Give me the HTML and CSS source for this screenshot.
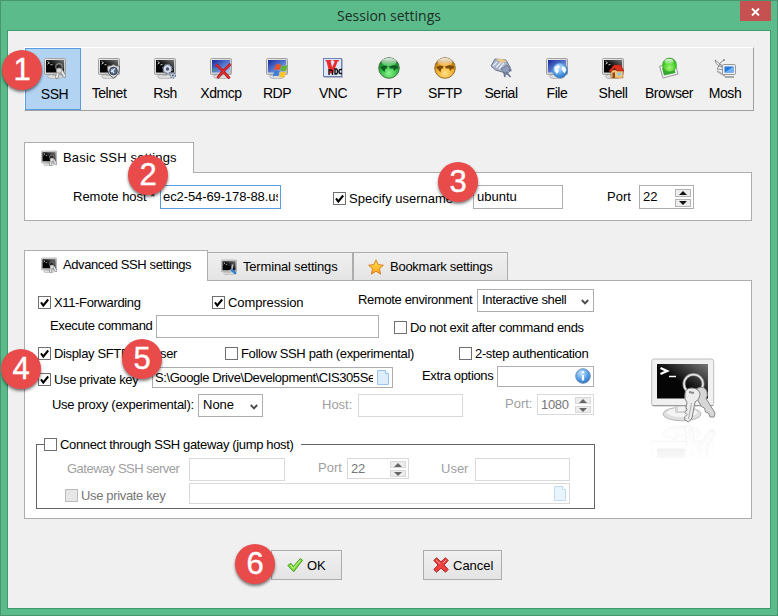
FILE: index.html
```html
<!DOCTYPE html>
<html lang="en">
<head>
<meta charset="utf-8">
<title>Session settings</title>
<link rel="stylesheet" href="styles.css">
</head>
<body>
<svg class="defs" width="0" height="0" aria-hidden="true">
  <defs>
    <linearGradient id="gFrame" x1="0" y1="0" x2="1" y2="1"><stop offset="0" stop-color="#f4f4f4"/><stop offset="1" stop-color="#b4b4b4"/></linearGradient>
    <linearGradient id="gDark" x1="0" y1="1" x2="1" y2="0"><stop offset="0.45" stop-color="#050505"/><stop offset="1" stop-color="#777"/></linearGradient>
    <linearGradient id="gBlue" x1="0" y1="0" x2="1" y2="1"><stop offset="0" stop-color="#172a9c"/><stop offset="0.6" stop-color="#5f83d8"/><stop offset="1" stop-color="#b7d0f5"/></linearGradient>
    <radialGradient id="gGreen" cx="0.5" cy="0.75" r="0.75"><stop offset="0" stop-color="#8df58c"/><stop offset="0.6" stop-color="#25b53a"/><stop offset="1" stop-color="#0b5f1b"/></radialGradient>
    <radialGradient id="gLime" cx="0.5" cy="0.7" r="0.75"><stop offset="0" stop-color="#a8f57c"/><stop offset="0.6" stop-color="#3fce22"/><stop offset="1" stop-color="#159410"/></radialGradient>
    <radialGradient id="gGold" cx="0.5" cy="0.75" r="0.75"><stop offset="0" stop-color="#ffe38a"/><stop offset="0.6" stop-color="#f3a31b"/><stop offset="1" stop-color="#8d5606"/></radialGradient>
    <radialGradient id="gSky" cx="0.4" cy="0.3" r="0.8"><stop offset="0" stop-color="#c8e6ff"/><stop offset="0.6" stop-color="#4e9ae4"/><stop offset="1" stop-color="#1d5dac"/></radialGradient>
    <linearGradient id="gGloss" x1="0" y1="0" x2="0" y2="1"><stop offset="0" stop-color="#fff" stop-opacity="0.9"/><stop offset="1" stop-color="#fff" stop-opacity="0.15"/></linearGradient>
    <linearGradient id="gStar" x1="0" y1="0" x2="0" y2="1"><stop offset="0" stop-color="#fff04a"/><stop offset="1" stop-color="#ff9a17"/></linearGradient>
    <linearGradient id="gFade" x1="0" y1="0" x2="0" y2="1"><stop offset="0.35" stop-color="#000"/><stop offset="1" stop-color="#777"/></linearGradient>
    <mask id="mFade" maskUnits="userSpaceOnUse" x="0" y="0" width="66" height="66"><rect width="66" height="66" fill="url(#gFade)"/></mask>

    <symbol id="monitor" viewBox="0 0 22 22">
      <ellipse cx="11" cy="19.500" rx="7.500" ry="2.300" fill="#ddd" stroke="#999" stroke-width="0.600"/>
      <rect x="8" y="16" width="5" height="3" fill="#bbb"/>
      <rect x="0.500" y="1.500" width="21" height="16" rx="1" fill="url(#gFrame)" stroke="#a2a2a2"/>
    </symbol>
    <symbol id="term" viewBox="0 0 22 22">
      <use href="#monitor"/>
      <rect x="2" y="3" width="18" height="12.500" fill="url(#gDark)"/>
      <path d="M3.500 4.500l2 1.300l-2 1.300M6.500 7.700h2" fill="none" stroke="#ddd" stroke-width="0.900"/>
    </symbol>
    <symbol id="bluescreen" viewBox="0 0 22 22">
      <use href="#monitor"/>
      <rect x="2" y="3" width="18" height="12.500" fill="url(#gBlue)"/>
    </symbol>
    <symbol id="keys" viewBox="0 0 22 22">
      <circle cx="15" cy="9.800" r="3.200" fill="none" stroke="#8b8b8b" stroke-width="1.100"/>
      <path d="M14.500 13l-1.500 7M17 13l3.500 6" stroke="#7d7d7d" stroke-width="3.400" stroke-linecap="round"/>
      <path d="M14.500 13l-1.500 7M17 13l3.500 6" stroke="#e6e6e6" stroke-width="2.100" stroke-linecap="round"/>
      <circle cx="15" cy="13.500" r="2.600" fill="#ddd" stroke="#888" stroke-width="0.700"/>
    </symbol>
    <symbol id="ssh" viewBox="0 0 22 22"><use href="#term"/><use href="#keys"/></symbol>
    <symbol id="telnet" viewBox="0 0 22 22"><use href="#term"/>
      <path d="M15.500 7.500q3 2 6 1.500q0.500 8.500-6 12q-6.500-3.500-6-12q3 0.500 6-1.500z" fill="#ddd" stroke="#666"/>
      <circle cx="15.500" cy="14" r="3.900" fill="#53688a" stroke="#34394a" stroke-width="0.800"/>
      <path d="M13 15l4-3.500M13.500 12.500l2.500 3.500" stroke="#dbe8fb" stroke-width="1.300"/>
    </symbol>
    <symbol id="rsh" viewBox="0 0 22 22"><use href="#term"/>
      <circle cx="13.500" cy="12" r="4.400" fill="#c5cfe0" stroke="#707c96" stroke-width="1.800" stroke-dasharray="2 1.400"/>
      <circle cx="13.500" cy="12" r="3.600" fill="#d3dbea"/><circle cx="13.500" cy="12" r="1.700" fill="#4a5368"/>
      <circle cx="18.800" cy="18.500" r="2.600" fill="#c5cfe0" stroke="#707c96" stroke-width="1.200" stroke-dasharray="1.500 1"/><circle cx="18.800" cy="18.500" r="1" fill="#5b657c"/>
    </symbol>
    <symbol id="xdmcp" viewBox="0 0 22 22"><use href="#bluescreen"/>
      <path d="M3 11l3 3h-3z" fill="#3fae45"/>
      <path d="M6 7.500q6 5 13.500 14M20.500 7q-7 6-13 14" fill="none" stroke="#a50d12" stroke-width="2.800"/>
      <path d="M6 7.500q6 5 13.500 14M20.500 7q-7 6-13 14" fill="none" stroke="#e92f2f" stroke-width="1.500"/>
    </symbol>
    <symbol id="rdp" viewBox="0 0 22 22"><use href="#bluescreen"/>
      <path d="M9.500 8q3-1.800 5.500-0.300l-1.300 5.500q-2.500-1.300-5.500 0.200z" fill="#e9532a"/>
      <path d="M15.800 8.300q2.500 1.300 5.700-0.300l-1.300 5.400q-3 1.500-5.600 0z" fill="#63b62e"/>
      <path d="M8 14.200q3-1.500 5.500-0.200l-1.300 5.300q-2.700-1.200-5.500 0.200z" fill="#3e7fda"/>
      <path d="M14.300 14.400q2.700 1.400 5.700 0l-1.300 5.400q-3 1.500-5.700 0z" fill="#fbc62b"/>
    </symbol>
    <symbol id="vnc" viewBox="0 0 22 22">
      <rect x="2" y="2" width="19" height="19" fill="#b8b8c4"/>
      <rect x="1.500" y="1.500" width="18" height="18" fill="#dfe8f8" stroke="#6e82b6"/>
      <path d="M3.500 3h6v1.200h-1l1.700 6l2.600-6h-1.500v-1.200h5.700v1.200h-1.300l-4.700 12.300h-3.500l-3-12.300h-1z" fill="#e92a2e"/>
      <path d="M7 18v-5h1.500q2 0 2 2v3M13 12v5h1.500q1-0.500 1-2.500t-1-2.500zM20 12.500h-1.500q-1.500 0-1.500 2t1.500 2h1.500" fill="none" stroke="#111" stroke-width="1.400"/>
    </symbol>
    <symbol id="lands" viewBox="0 0 22 22">
      <path d="M2 10l4-1.500l3.500 0.500l-0.500 2l-2 1.500l-0.500 3l-2-2.500zM11 9.500l4-1.500l5 1l-0.500 3l-1.500-0.500l-1.500 2.500l-1.500-2.500h-3z" fill-opacity="0.800"/>
    </symbol>
    <symbol id="ftp" viewBox="0 0 22 22"><circle cx="11" cy="11" r="10.300" fill="url(#gGreen)" stroke="#4c7a50"/><use href="#lands" fill="#06451b"/><ellipse cx="11" cy="5" rx="7.500" ry="4" fill="url(#gGloss)"/></symbol>
    <symbol id="sftp" viewBox="0 0 22 22"><circle cx="11" cy="11" r="10.300" fill="url(#gGold)" stroke="#91743a"/><use href="#lands" fill="#5c3504"/><ellipse cx="11" cy="5" rx="7.500" ry="4" fill="url(#gGloss)"/></symbol>
    <symbol id="serial" viewBox="0 0 22 22">
      <path d="M1 9l4-7l11 1l4.500 8l-5 5l-10-3z" fill="#a8b3ca" stroke="#6b7690"/>
      <path d="M6 2.500l5-1l6 2.500l-5 2z" fill="#e9c98a"/>
      <path d="M3 9l4-4M6 10.500l5-5M9 12l5-6" stroke="#e6ebf5" stroke-width="1.300"/>
      <path d="M11 12l6-4l4 5l-5 5z" fill="#8f9bb8" stroke="#5c6781" stroke-width="0.700"/><path d="M14 15l1 5M16 15l4.500 5M19 13l2.500 0.500" stroke="#69758f" stroke-width="1.800"/>
    </symbol>
    <symbol id="file" viewBox="0 0 22 22"><use href="#bluescreen"/>
      <circle cx="14" cy="13.500" r="7.500" fill="url(#gSky)" stroke="#4b84be" stroke-width="0.600"/>
      <path d="M8.500 10l4-2l1.500 2l-2 2l1 2l-2 3l-2.500-3zM16 9l3 1l1.500 3l-2 3.500l-2-2.500l-1-2z" fill="#f3faff"/>
    </symbol>
    <symbol id="shell" viewBox="0 0 22 22"><use href="#term"/>
      <path d="M9 13h12v8h-12z" fill="#f7c675" stroke="#a8662d" stroke-width="0.600"/>
      <path d="M7 14l5-6h6.500l3.500 6h-7l-2.500-3l-3.500 4z" fill="#d9331f" stroke="#9d2113" stroke-width="0.600"/>
      <rect x="10.500" y="15.500" width="2.500" height="5.500" fill="#8c4722"/><rect x="15.500" y="15.500" width="3.500" height="3" fill="#8cc7ef"/>
    </symbol>
    <symbol id="browser" viewBox="0 0 22 22">
      <path d="M1.500 9l16-1.500l2.500 9.500l-15 4z" fill="#f5f5f5" stroke="#999"/>
      <path d="M4 11l12-1l1.500 6l-11.500 2.500z" fill="#37a832"/>
      <circle cx="11.500" cy="8" r="7" fill="url(#gLime)" stroke="#3d9d2d" stroke-width="0.600"/><ellipse cx="11" cy="4.500" rx="4.500" ry="2.700" fill="url(#gGloss)"/>
    </symbol>
    <symbol id="mosh" viewBox="0 0 22 22">
      <path d="M1 3q1 7 9 7zM3 12l3-5l4 6z" fill="#eee" stroke="#888" stroke-width="0.900"/><path d="M5 7l5-4" stroke="#888"/><circle cx="10" cy="3" r="1" fill="#888"/>
      <path d="M3 14l8 5" stroke="#aaa" stroke-width="1.500"/>
      <rect x="8.500" y="7.500" width="13" height="10" rx="1" fill="#eee" stroke="#999"/><rect x="10.500" y="9.500" width="9" height="6" fill="#2478dc"/><path d="M10.500 15.500l9-6v6z" fill="#6fb0f5"/>
      <path d="M11 20h9" stroke="#aaa" stroke-width="2"/>
    </symbol>
    <symbol id="wrench" viewBox="0 0 22 22"><use href="#term"/><path d="M16 7.500l-1 7l-7 4.500" fill="none" stroke="#bbb" stroke-width="2.400"/><path d="M14 14l6.500 6.500" stroke="#2f7fce" stroke-width="3.200"/></symbol>
    <symbol id="star" viewBox="0 0 16 16"><path d="M8 0.800l2.200 4.900l5.200 0.500l-4 3.500l1.200 5.400l-4.600-2.900l-4.600 2.900l1.200-5.400l-4-3.500l5.200-0.500z" fill="url(#gStar)" stroke="#d8761c" stroke-width="0.900"/></symbol>
    <symbol id="doc" viewBox="0 0 12 15"><path d="M0.500 0.500h8l3 3v11h-11z" fill="#dcedfd" stroke="#9cc4ea"/><path d="M8.500 0.500v3h3" fill="#fff" stroke="#9cc4ea"/></symbol>
    <symbol id="tick" viewBox="0 0 13 13"><path d="M3 6.300l2.300 3.200l4.900-6" fill="none" stroke="#000" stroke-width="2"/></symbol>
    <symbol id="chev" viewBox="0 0 8 6"><path d="M0.800 1l3.200 3.300l3.200-3.300" fill="none" stroke="#4d4d4d" stroke-width="1.900"/></symbol>
    <symbol id="bigterm" viewBox="0 0 66 66">
      <ellipse cx="31" cy="56" rx="19" ry="6.800" fill="#e0e0e0" stroke="#b5b5b5"/><ellipse cx="31" cy="54.500" rx="15" ry="4.500" fill="#f4f4f4"/>
      <rect x="24" y="46" width="13" height="9" fill="#d5d5d5"/><rect x="27" y="48" width="7" height="5" fill="#f3f3f3"/>
      <rect x="0.700" y="1" width="62" height="47" rx="2.500" fill="#f1f1f1" stroke="#bdbdbd"/><path d="M1.500 47.500h60.500" stroke="#999"/>
      <rect x="6" y="6" width="51" height="34.500" fill="url(#gDark)"/>
      <path d="M9.500 10l6.500 3l-6.500 3" fill="none" stroke="#fff" stroke-width="2.400"/><path d="M18 18.500h7" stroke="#fff" stroke-width="1.500"/>
      <circle cx="42.500" cy="26" r="9.500" fill="none" stroke="#8a8a8a" stroke-width="3"/><circle cx="42.500" cy="26" r="9.500" fill="none" stroke="#e8e8e8" stroke-width="1.600"/>
      <path d="M47 30q7-2.500 9 4q1 4-1 6.500l9 14.500l-1 4h-4l-1.500-4l-3-1l-1-4l-3-1.500l-6-10q-3-6 2.500-8.500z" fill="#d7d7d7" stroke="#888"/>
      <path d="M34 36q0-6 7-6q8 0.500 8 7q-0.500 5-5 7l-3 16l-3.500 4l-4-2.500l0.500-3l2-2l-2-2l2-3l-1-2l1-5q-3-3-2-8.500z" fill="#ececec" stroke="#828282"/>
      <path d="M40.500 45l-3 16" stroke="#aaa"/><path d="M38 34l5 1" stroke="#8a8a8a" stroke-width="2"/>
    </symbol>
  </defs>
</svg>

<div class="window">
  <header class="titlebar">
    <span class="title">Session settings</span>
    <button class="close" aria-label="Close"><svg width="9" height="8" viewBox="0 0 9 8"><path d="M1 0.500l7 7M8 0.500l-7 7" stroke="#fff" stroke-width="1.900"/></svg></button>
  </header>

  <main class="client">
    <nav class="toolbar">
      <a class="tool selected"><svg><use href="#ssh"/></svg>SSH</a>
      <a class="tool"><svg><use href="#telnet"/></svg>Telnet</a>
      <a class="tool"><svg><use href="#rsh"/></svg>Rsh</a>
      <a class="tool"><svg><use href="#xdmcp"/></svg>Xdmcp</a>
      <a class="tool"><svg><use href="#rdp"/></svg>RDP</a>
      <a class="tool"><svg><use href="#vnc"/></svg>VNC</a>
      <a class="tool"><svg><use href="#ftp"/></svg>FTP</a>
      <a class="tool"><svg><use href="#sftp"/></svg>SFTP</a>
      <a class="tool"><svg><use href="#serial"/></svg>Serial</a>
      <a class="tool"><svg><use href="#file"/></svg>File</a>
      <a class="tool"><svg><use href="#shell"/></svg>Shell</a>
      <a class="tool"><svg><use href="#browser"/></svg>Browser</a>
      <a class="tool"><svg><use href="#mosh"/></svg>Mosh</a>
    </nav>

    <section class="group basic">
      <div class="tabs"><div class="tab active"><svg><use href="#ssh"/></svg>Basic SSH settings</div></div>
      <div class="body">
        <div class="row row-host">
          <span class="label d4">Remote host *</span>
          <span class="field focus h24"><span class="clip">ec2-54-69-178-88.us</span></span>
          <span class="check d6"><i class="box"><svg><use href="#tick"/></svg></i>Specify username</span>
          <span class="field h24">ubuntu</span>
          <span class="label d4">Port</span>
          <span class="field h24 spin">22<span class="arrows tall"><i class="up"></i><i class="down"></i></span></span>
        </div>
      </div>
    </section>

    <section class="group advanced">
      <div class="tabs">
        <div class="tab active"><svg><use href="#ssh"/></svg>Advanced SSH settings</div>
        <div class="tab terminal"><svg><use href="#wrench"/></svg>Terminal settings</div>
        <div class="tab bookmark"><svg><use href="#star"/></svg>Bookmark settings</div>
      </div>
      <div class="body split">
        <div class="form">
          <div class="row row-x11">
            <span class="check d6"><i class="box"><svg><use href="#tick"/></svg></i>X11-Forwarding</span>
            <span class="check wide d6"><i class="box"><svg><use href="#tick"/></svg></i>Compression</span>
            <span class="label d3">Remote environment</span>
            <span class="field select">Interactive shell<svg><use href="#chev"/></svg></span>
          </div>
          <div class="row row-exec">
            <span class="label d3">Execute command</span>
            <span class="field"></span>
            <span class="check d5"><i class="box"></i>Do not exit after command ends</span>
          </div>
          <div class="row row-sftp">
            <span class="check d4"><i class="box"><svg><use href="#tick"/></svg></i>Display SFTP-browser</span>
            <span class="check d4"><i class="box"></i>Follow SSH path (experimental)</span>
            <span class="check d4"><i class="box"></i>2-step authentication</span>
          </div>
          <div class="row row-key">
            <span class="check d6"><i class="box"><svg><use href="#tick"/></svg></i>Use private key</span>
            <span class="field h21 path d1"><span class="clip">S:\Google Drive\Development\CIS305Se</span><svg class="doc"><use href="#doc"/></svg></span>
            <span class="label d2">Extra options</span>
            <span class="field h21 info"><svg viewBox="0 0 16 16"><circle cx="8" cy="8" r="7.300" fill="url(#gSky)" stroke="#6f94bd"/><path d="M8 7v5.500M8 3.300v2" stroke="#fff" stroke-width="2.200"/></svg></span>
          </div>
          <div class="row row-proxy">
            <span class="label d3">Use proxy (experimental):</span>
            <span class="field select">None<svg><use href="#chev"/></svg></span>
            <span class="label off d3">Host:</span>
            <span class="field off"></span>
            <span class="label off d2">Port:</span>
            <span class="field off h21 spin">1080<span class="arrows"><i class="up"></i><i class="down"></i></span></span>
          </div>
          <fieldset class="gateway">
            <legend><span class="check"><i class="box"></i>Connect through SSH gateway (jump host)</span></legend>
            <div class="row row-gw">
              <span class="label off tight d3">Gateway SSH server</span>
              <span class="field off"></span>
              <span class="label off plain d2">Port</span>
              <span class="field off h21 spin">22<span class="arrows"><i class="up"></i><i class="down"></i></span></span>
              <span class="label off plain d3">User</span>
              <span class="field off"></span>
            </div>
            <div class="row row-gwkey">
              <span class="check off d5"><i class="box"></i>Use private key</span>
              <span class="field off h21 path"><span class="clip"></span><svg class="doc"><use href="#doc"/></svg></span>
            </div>
          </fieldset>
        </div>
        <svg class="art" viewBox="0 0 66 100">
          <use href="#bigterm" width="66" height="66"/>
          <g transform="translate(0 131) scale(1 -1)" opacity="0.300"><g mask="url(#mFade)"><use href="#bigterm" width="66" height="66"/></g></g>
        </svg>
      </div>
    </section>

    <footer class="actions">
      <button class="btn ok"><svg viewBox="0 0 16 16"><path d="M0.800 8.500l3-2.300l2.500 3.300l7-8l2.200 1.700l-8.700 11.500z" fill="#7be032" stroke="#4d9a2a"/><path d="M3.500 8l2.800 3.500l7-8.500" fill="none" stroke="#c4f79a"/></svg>OK</button>
      <button class="btn cancel"><svg viewBox="0 0 16 16"><path d="M0.800 3.500l2.700-2.700l4.500 4l4.500-4l2.700 2.700l-4.200 4.500l4.200 4.500l-2.700 2.700l-4.500-4l-4.500 4l-2.700-2.700l4.200-4.500z" fill="#ef3e3e" stroke="#a92a2a"/><path d="M3 3l4.500 4M13 3l-3 3" stroke="#ff9c9c"/></svg>Cancel</button>
    </footer>
  </main>

  <span class="step s1">1</span>
  <span class="step s2">2</span>
  <span class="step s3">3</span>
  <span class="step s4">4</span>
  <span class="step s5">5</span>
  <span class="step s6">6</span>
</div>
</body>
</html>
```
FILE: styles.css
```css
* { box-sizing: border-box; }
body { margin: 0; font: 13px/15px "Liberation Sans", Arial, sans-serif; color: #000; }
svg { display: block; flex: none; }
.defs { position: absolute; }

.window {
  position: relative;
  width: 778px; height: 616px;
  padding: 0 6px;
  border: 1px solid #489570;
  background: #5bbb8b;
  overflow: hidden;
}

/* title bar */
.titlebar { display: grid; grid-template-columns: 1fr auto 1fr; height: 29px; }
.title { grid-column: 2; padding-top: 5px; font: 14px/20px "Open Sans", "Noto Sans", sans-serif; color: #1d2f26; }
.close {
  justify-self: end;
  width: 31px; height: 20px; padding: 2px 0 0;
  display: flex; align-items: center; justify-content: center;
  border: 0; background: #c75050;
}

.client {
  width: 764px; height: 579px;
  padding: 16px;
  border: 1px solid #419a6e;
  background: #f0f0f0;
}

/* session type toolbar */
.toolbar {
  display: flex;
  width: 730px; height: 64px;
  border: 1px solid; border-color: #fff #a0a0a0 #a0a0a0 #fff;
  font-size: 14px;
  letter-spacing: -0.45px;
}
.tool {
  width: 56px; height: 62px;
  padding: 9px 0 0;
  display: flex; flex-direction: column; align-items: center; gap: 7px;
  white-space: nowrap;
}
.tool svg { width: 22px; height: 22px; }
.tool.selected { padding: 8px 0 0 3px; gap: 8px; border: 1px solid #569de5; background: #b3d3f3; }

/* tabbed groups */
.tabs { display: flex; align-items: flex-end; height: 31px; margin-bottom: -1px; }
.tab {
  display: flex; gap: 6px;
  height: 29px; padding: 6px 0 0 14px;
  border: 1px solid #adadad;
  background: linear-gradient(#f0f0f0, #e4e4e4);
  white-space: nowrap;
}
.tab svg { width: 16px; height: 16px; }
.tab.active { height: 31px; padding: 6px 0 0 16px; border-bottom: 0; background: #fff; position: relative; }
.body { width: 728px; border: 1px solid #adadad; background: #fff; }

.basic { margin-top: 31px; }
.basic .tab { width: 170px; letter-spacing: 0.18px; }
.basic .tab.active { padding-top: 7px; }
.basic .body { height: 49px; padding: 12px 0 0 48px; }

.advanced { margin-top: 29px; }
.advanced .tab.active { width: 184px; letter-spacing: -0.4px; }
.advanced .tab.terminal { width: 145px; border-left: 0; padding-left: 13px; letter-spacing: -0.18px; }
.advanced .tab.bookmark { width: 155px; letter-spacing: -0.26px; }
.advanced .body { height: 239px; padding-top: 8px; }
.split { display: flex; }
.form { width: 570px; letter-spacing: -0.35px; }
.art { width: 66px; height: 100px; margin: 69px 0 0 56px; }

/* form rows: one column per control */
.row { display: grid; align-items: start; white-space: nowrap; }
.row-host { grid-template-columns: 87px 173px 140px 134px 32px 55px; }
.row-host .field:nth-child(2) { width: 121px; }
.row-host .field:nth-child(4) { width: 90px; }
.row-x11, .row-sftp, .row-key { margin-left: 13px; }
.row-x11 { grid-template-columns: 174px 146px 119px 117px; height: 26px; }
.row-exec { margin-left: 25px; grid-template-columns: 106px 238px 200px; height: 27px; }
.row-exec .field { width: 223px; }
.row-sftp { grid-template-columns: 187px 234px 130px; height: 24px; }
.row-key { grid-template-columns: 114px 270px 75px 97px; height: 28px; }
.row-key .path { width: 241px; letter-spacing: -0.42px; }
.row-proxy { margin-left: 27px; grid-template-columns: 146px 124px 36px 147px 32px 57px; height: 43px; }
.row-proxy .label { letter-spacing: -0.28px; }
.row-proxy .field:nth-child(2) { width: 65px; letter-spacing: 0; }
.row-proxy .field:nth-child(4) { width: 105px; }
.row-gw { margin-left: 30px; grid-template-columns: 122px 129px 29px 94px 34px 95px; height: 25px; }
.row-gw .field:nth-child(2) { width: 96px; }
.row-gw .spin { width: 62px; }
.row-gwkey { margin-left: 28px; grid-template-columns: 124px 381px; }

.wide { letter-spacing: -0.1px; }
.tight { letter-spacing: -0.5px; }
.plain, .row-proxy .label.off { letter-spacing: 0; }

.d1 { margin-top: 1px; }
.d2 { margin-top: 2px; }
.d3 { margin-top: 3px; }
.d4 { margin-top: 4px; }
.d5 { margin-top: 5px; }
.d6 { margin-top: 6px; }

.check { display: flex; align-items: center; gap: 3px; }
.box { width: 13px; height: 13px; border: 1px solid #707070; background: #fff; flex: none; }
.box svg { width: 13px; height: 13px; margin: -1px; }

.field {
  display: flex; justify-content: space-between;
  height: 23px; padding: 2px 2px 0 4px;
  border: 1px solid #abadb3;
  background: #fff;
}
.h24 { height: 24px; padding-top: 3px; padding-left: 3px; }
.h21 { height: 21px; padding-left: 3px; }
.focus { border-color: #569de5; padding-left: 2px; letter-spacing: -0.1px; }
.focus .clip { margin-right: 0; }
.path { padding: 2px 3px 0 2px; }
.clip { flex: 1; min-width: 0; overflow: hidden; margin-right: 4px; }
.doc { width: 12px; height: 15px; }
.info { justify-content: flex-end; padding-top: 1px; }
.info svg { width: 16px; height: 16px; }
.select svg { width: 8px; height: 6px; margin: 7px 2px 0 0; }

.arrows { display: grid; gap: 2px; grid-template-rows: 7px 7px; align-content: start; }
.arrows.tall { grid-template-rows: 8px 8px; }
.arrows i { display: flex; align-items: center; justify-content: center; width: 16px; border: 1px solid #b4b4b4; background: #ececec; }
.arrows i::after { content: ""; border: 4px solid transparent; border-top-width: 0; border-bottom: 4px solid #111; }
.arrows .down::after { transform: scaleY(-1); }

.label.off { color: #a0a0a0; }
.check.off, .field.off { color: #777; }
.field.off { border-color: #d9d9d9; }
.off .doc { opacity: 0.6; }
.check.off .box { border-color: #bcbcbc; background: #e6e6e6; }
.off .arrows i { border-color: #d9d9d9; }
.off .arrows i::after { border-bottom-color: #666; }

/* SSH gateway */
.gateway {
  width: 559px; height: 72px;
  min-width: 0; margin: 0 0 0 11px; padding: 0;
  border: 1px solid #646464;
}
.gateway legend { height: 15px; margin-left: 7px; padding: 0; width: 257px; white-space: nowrap; }
.gateway .row-gw { margin-top: 6px; }

/* dialog buttons */
.actions { display: flex; gap: 81px; margin: 31px 0 0 247px; }
.btn {
  display: flex; align-items: center; gap: 4px;
  height: 30px; padding: 0 0 0 15px;
  border: 1px solid #adadad;
  background: linear-gradient(#f0f0f0, #e4e4e4);
  font: inherit; color: inherit;
}
.btn svg { width: 16px; height: 16px; }
.ok { width: 71px; }
.cancel { width: 79px; padding-left: 9px; }

/* numbered callouts over the dialog */
.step {
  position: absolute;
  width: 40px; height: 40px;
  border-radius: 50%;
  background: #e94a4a;
  box-shadow: 0 2px 3px rgba(0, 0, 0, 0.5);
  color: #fff;
  font-size: 31px; line-height: 39px; text-align: center;
  -webkit-text-stroke: 0.4px #fff;
}
.s1 { left: 1px; top: 49px; }
.s2 { left: 127px; top: 154px; }
.s3 { left: 437px; top: 161px; }
.s4 { left: 0; top: 348px; }
.s5 { left: 121px; top: 338px; }
.s6 { left: 234px; top: 543px; }
```
